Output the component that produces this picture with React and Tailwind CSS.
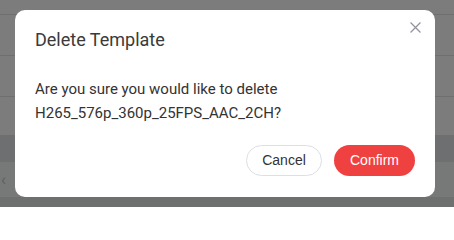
import React from "react";

export default function App() {
  return (
    <div className="relative w-[454px] h-[207px] overflow-hidden bg-[#f8f8f8]" style={{ fontFamily: "Roboto, 'Liberation Sans', sans-serif" }}>
      {/* background page */}
      <div className="flex flex-col w-full h-full">
        <div className="h-[15px] border-b border-[#dedede]" />
        <div className="h-[41px] border-b border-[#dedede]" />
        <div className="h-[41px] border-b border-[#dedede]" />
        <div className="h-[38px]" />
        <div className="h-[27px] bg-[#dadfe0]" />
        <div className="h-[35px] bg-[#eef2f2] flex items-center pl-[1px] text-[#b8bcbc] text-[16px]">‹</div>
        <div className="flex-1 bg-[#dde1e1]" />
      </div>
      {/* overlay */}
      <div className="absolute inset-0 bg-black/50" />
      {/* modal */}
      <div className="absolute left-[15px] top-[10px] w-[420px] h-[187px] bg-white rounded-[10px] flex flex-col">
        <button className="absolute right-[14px] top-[11px] w-[12px] h-[12px] flex items-center justify-center">
          <svg width="11" height="11" viewBox="0 0 10 10" fill="none" stroke="#909399" strokeWidth="1.1">
            <path d="M0.5 0.5 L9.5 9.5 M9.5 0.5 L0.5 9.5" />
          </svg>
        </button>
        <div className="pl-[20px] pt-[18px] text-[18px] leading-[24px] text-[#3a3a3a]">Delete Template</div>
        <div className="pl-[20px] pt-[25px] text-[15px] leading-[24px] text-[#333333]">
          <div>Are you sure you would like to delete</div>
          <div>H265_576p_360p_25FPS_AAC_2CH?</div>
        </div>
        <div className="flex justify-end gap-[12px] pr-[20px] pt-[20px]" style={{ fontFamily: "'Liberation Sans', Arial, sans-serif" }}>
          <button className="w-[76px] h-[31px] rounded-full border border-[#dcdfe6] bg-white text-[14px] text-[#333333]">Cancel</button>
          <button className="w-[81px] h-[31px] rounded-full bg-[#f04141] text-[14px] text-white">Confirm</button>
        </div>
      </div>
    </div>
  );
}
